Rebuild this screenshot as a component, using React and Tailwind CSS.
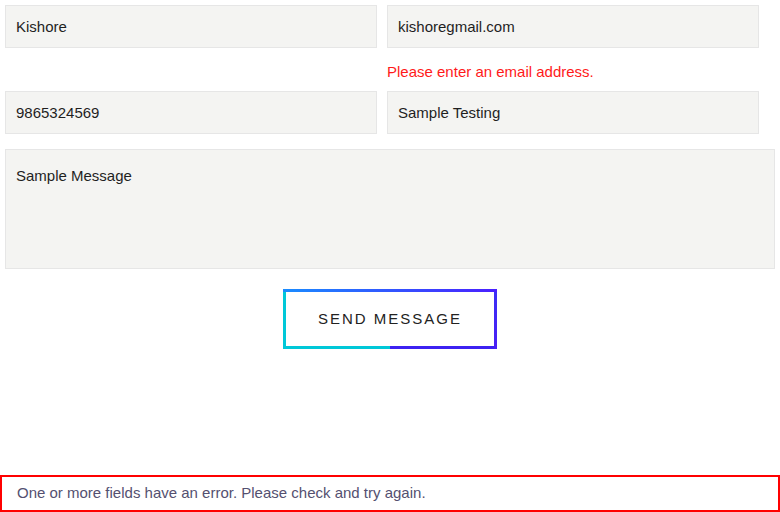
import React from "react";

export default function App() {
  const font = { fontFamily: '"Liberation Sans", Arial, sans-serif' };
  const inputCls =
    "block w-full h-[43px] border border-[#e6e6e6] bg-[#f4f4f2] px-[10px] text-[15px] text-[#1f1f1f] outline-none";
  return (
    <div className="w-[780px] h-[512px] bg-white overflow-hidden flex flex-col" style={font}>
      <form className="flex flex-col gap-[15px] pt-[5px] px-[5px]">
        <div className="grid grid-cols-[372px_372px] gap-x-[10px] gap-y-[9px]">
          <input className={inputCls} defaultValue="Kishore" readOnly style={font} />
          <div className="flex flex-col gap-[14px]">
            <input className={inputCls} defaultValue="kishoregmail.com" readOnly style={font} />
            <div className="text-[15px] leading-[20px] text-[#ff1a1a]">
              Please enter an email address.
            </div>
          </div>
          <input className={inputCls} defaultValue="9865324569" readOnly style={font} />
          <input className={inputCls} defaultValue="Sample Testing" readOnly style={font} />
        </div>
        <textarea
          className="block w-[770px] h-[120px] resize-none border border-[#e6e6e6] bg-[#f4f4f2] px-[10px] pt-[16px] text-[15px] leading-[20px] text-[#1f1f1f] outline-none"
          defaultValue="Sample Message"
          readOnly
          style={font}
        />
        <div className="mt-[5px] flex justify-center">
          <button
            type="button"
            className="w-[214px] h-[60px] p-[3px] [background:linear-gradient(to_right,#1a8cff,#4a1fff)_top_/_100%_3px_no-repeat,linear-gradient(#3b2ff5,#4a1ff5)_right_/_3px_100%_no-repeat,linear-gradient(#3d22f2,#3d22f2)_right_bottom_/_50%_3px_no-repeat,#00c8d8]"
            style={font}
          >
            <span className="flex h-full w-full items-center justify-center bg-white text-[15px] uppercase tracking-[2px] text-[#222]">
              Send Message
            </span>
          </button>
        </div>
      </form>
      <div className="mt-auto flex h-[37px] w-[780px] items-center border-2 border-[#ff0000] px-[15px] text-[15px] text-[#545070]">
        One or more fields have an error. Please check and try again.
      </div>
    </div>
  );
}
